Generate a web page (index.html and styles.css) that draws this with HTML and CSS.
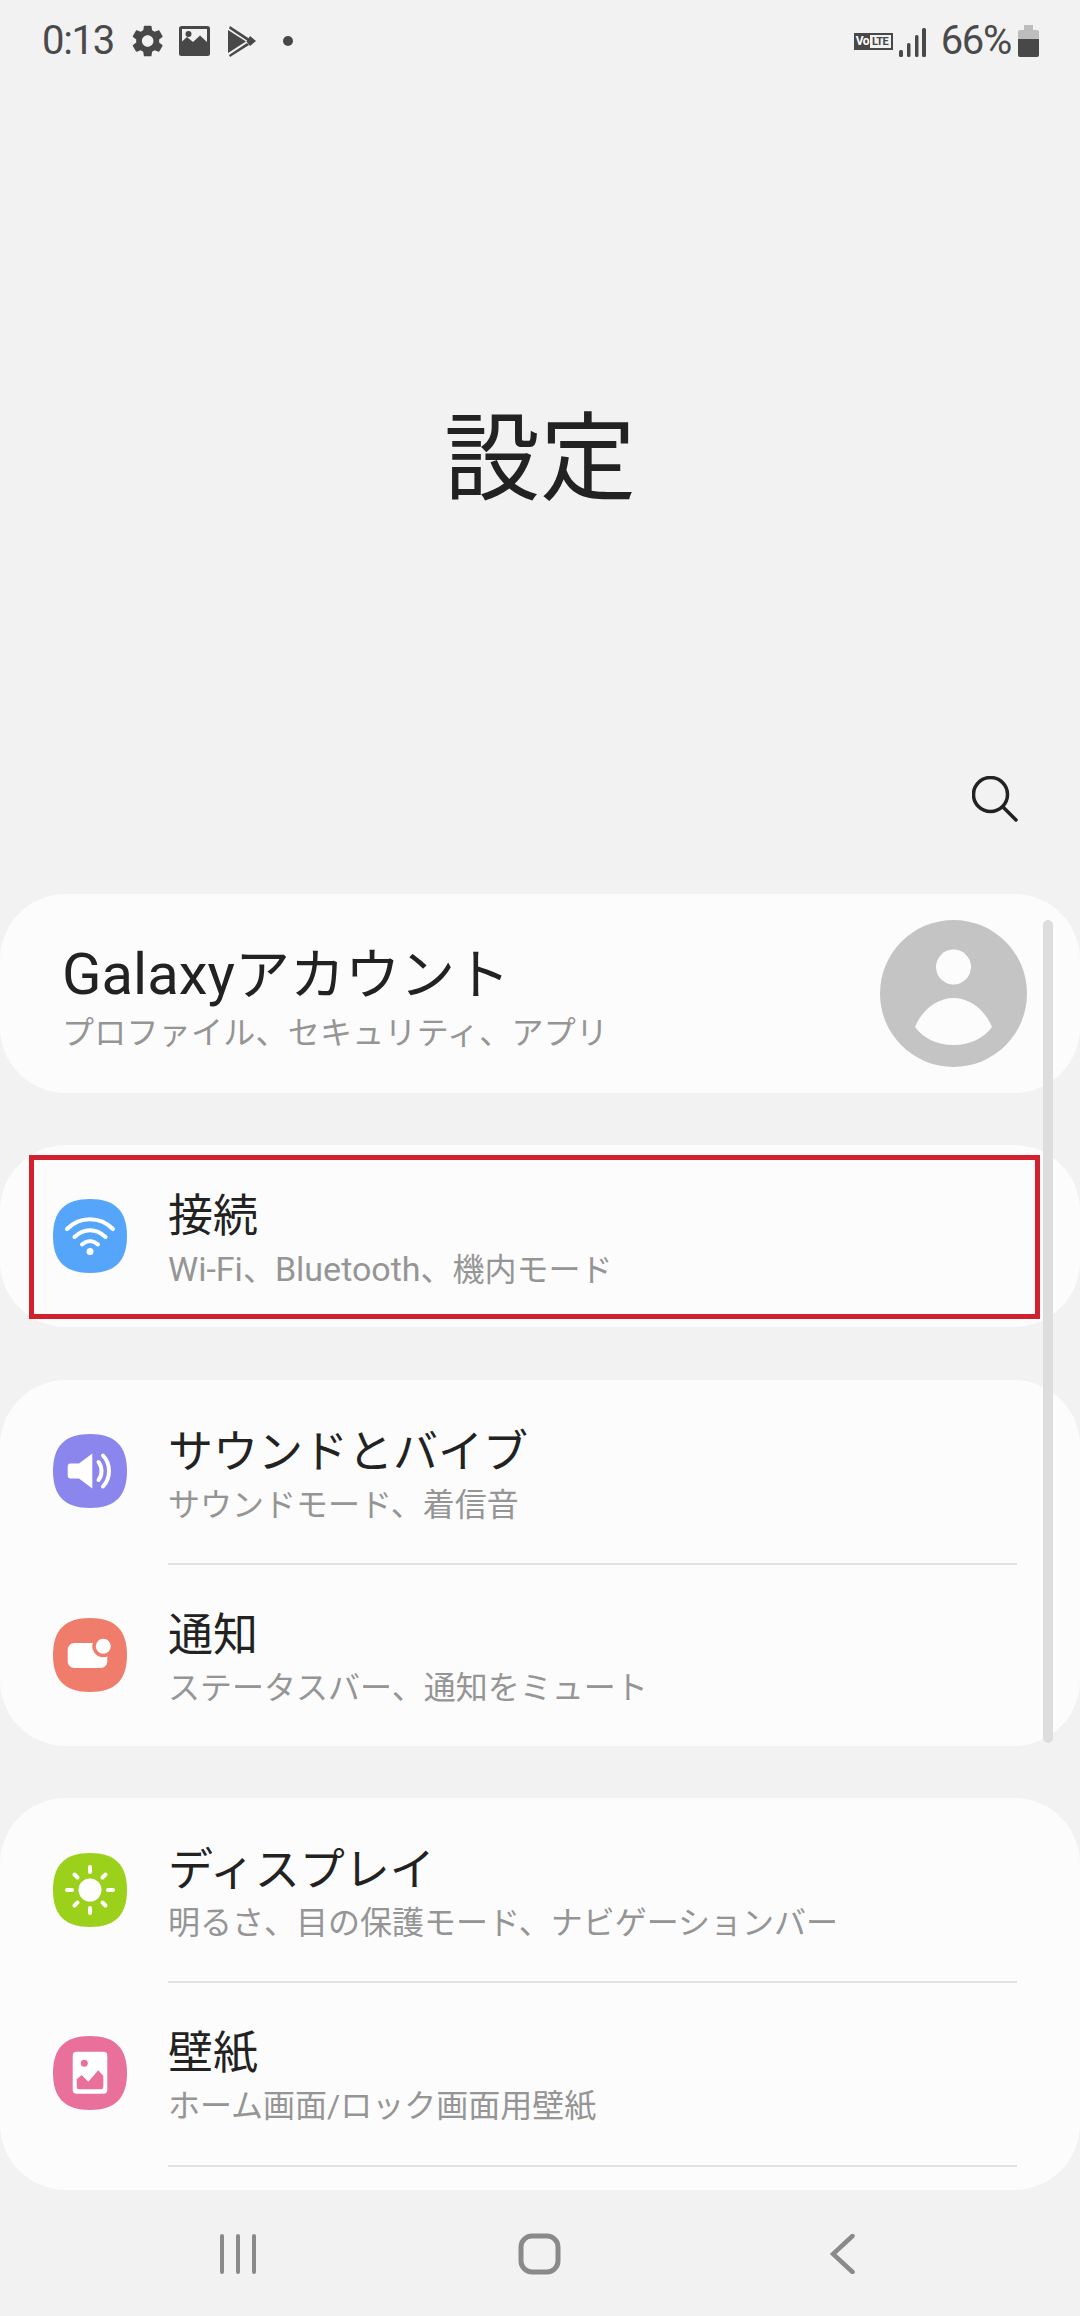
FILE: index.html
```html
<!DOCTYPE html>
<html lang="ja">
  <head>
    <meta charset="utf-8" />
    <meta name="viewport" content="width=device-width, initial-scale=1.0" />
    <title>設定</title>
    <link rel="stylesheet" href="styles.css">
  </head>

  <body>
    <header class="status-bar">
      <div class="status-left">
        <span class="clock">0:13</span>
        <svg class="gear" viewBox="2.4 2 19.6 20"><path d="M19.14 12.94c.04-.3.06-.61.06-.94 0-.32-.02-.64-.07-.94l2.03-1.58a.49.49 0 0 0 .12-.61l-1.92-3.32a.488.488 0 0 0-.59-.22l-2.39.96c-.5-.38-1.03-.7-1.62-.94l-.36-2.54a.484.484 0 0 0-.48-.41h-3.84c-.24 0-.43.17-.47.41l-.36 2.54c-.59.24-1.13.57-1.62.94l-2.39-.96c-.22-.08-.47 0-.59.22L2.74 8.87c-.12.21-.08.47.12.61l2.03 1.58c-.05.3-.09.63-.09.94s.02.64.07.94l-2.03 1.58a.49.49 0 0 0-.12.61l1.92 3.32c.12.22.37.29.59.22l2.39-.96c.5.38 1.03.7 1.62.94l.36 2.54c.05.24.24.41.48.41h3.84c.24 0 .44-.17.47-.41l.36-2.54c.59-.24 1.13-.56 1.62-.94l2.39.96c.22.08.47 0 .59-.22l1.92-3.32c.12-.22.07-.47-.12-.61l-2.01-1.58zM12 15.6c-1.98 0-3.6-1.62-3.6-3.6s1.62-3.6 3.6-3.6 3.6 1.62 3.6 3.6-1.62 3.6-3.6 3.6z"/></svg>
        <svg class="pic" viewBox="0 0 31 30"><path fill-rule="evenodd" d="M2.5 0h26A2.5 2.5 0 0 1 31 2.500v25a2.500 2.500 0 0 1-2.500 2.500h-26A2.500 2.500 0 0 1 0 27.500v-25A2.500 2.500 0 0 1 2.500 0zM3 3v12.500l5-4.500 6 5 7-6.500 7 6.500V3zM9.500 5a3 3 0 1 1 0 6 3 3 0 0 1 0-6z"/></svg>
        <svg class="play" viewBox="0 0 28 31"><path d="M0 4 18 15.500 0 27zM2 0 21 12.500 19 14.500 1 2.500zM1 29 19 17 21 19 2 31zM22 10 28 15 22 20 18.500 15.500z"/></svg>
        <span class="dot"></span>
      </div>
      <div class="status-right">
        <span class="volte"><span class="vo">Vo</span><span class="lte">LTE</span></span>
        <svg class="signal" viewBox="0 0 27 29"><rect x="0" y="22" width="4" height="7" rx="1.500"/><rect x="8" y="15" width="3.500" height="14" rx="1.500"/><rect x="16" y="7" width="3.500" height="22" rx="1.500"/><rect x="23" y="0" width="4" height="29" rx="1.500"/></svg>
        <span class="percent">66%</span>
        <svg class="battery" viewBox="0 0 21 32"><path fill="#bdbdbd" d="M6 0h9v5h4a2 2 0 0 1 2 2v8H0V7a2 2 0 0 1 2-2h4z"/><path d="M0 14h21v16a2 2 0 0 1-2 2H2a2 2 0 0 1-2-2z"/></svg>
      </div>
    </header>

    <h1 class="page-title">設定</h1>

    <div class="search-row">
      <svg class="search" viewBox="0 0 46 46"><circle cx="18.500" cy="18.500" r="17" /><path d="M31 31 44 44"/></svg>
    </div>

    <main class="list">
      <section class="card account">
        <div class="account-text">
          <h2 class="account-name"><span class="latin-big">Galaxy</span>アカウント</h2>
          <p class="sub account-sub">プロファイル、セキュリティ、アプリ</p>
        </div>
        <svg class="avatar" viewBox="0 0 147 147">
          <circle cx="73.500" cy="73.500" r="73.500" fill="#c4c4c4"/>
          <circle cx="73.500" cy="47" r="17.500" fill="#fcfcfc"/>
          <path d="M35 107C42 90 57 78 73.500 78S105 90 112 107C104 118 90 125 73.500 125S43 118 35 107Z" fill="#fcfcfc"/>
        </svg>
      </section>

      <section class="card highlighted">
        <div class="row">
          <svg class="app-icon" viewBox="0 0 74 74">
            <path fill="#55a6fb" d="M37 0C62 0 74 12 74 37S62 74 37 74 0 62 0 37 12 0 37 0Z"/>
            <g class="line-art">
              <path d="M14 30C27 17 47 17 60 30"/>
              <path d="M21.500 38C31 29 43 29 52.500 38"/>
              <path d="M29 45.500C34 41 40 41 45 45.500"/>
            </g>
            <circle cx="37" cy="52.500" r="3.500" fill="#fff"/>
          </svg>
          <div class="row-text">
            <h2 class="row-title">接続</h2>
            <p class="sub"><span class="latin">Wi-Fi</span>、<span class="latin">Bluetooth</span>、機内モード</p>
          </div>
        </div>
        <div class="red-box"></div>
      </section>

      <section class="card">
        <div class="row first-row">
          <svg class="app-icon" viewBox="0 0 74 74">
            <path fill="#8a86ee" d="M37 0C62 0 74 12 74 37S62 74 37 74 0 62 0 37 12 0 37 0Z"/>
            <path fill="#fff" d="M39.300 19.500V54.500L26 44.500H17.500Q14.700 44.500 14.700 41.500V32.500Q14.700 29.500 17.500 29.500H26Z"/>
            <g class="line-art">
              <path d="M45.500 28C49.500 33 49.500 41 45.500 46"/>
              <path d="M50 21.500C58 30 58 44 50 52.500"/>
            </g>
          </svg>
          <div class="row-text">
            <h2 class="row-title">サウンドとバイブ</h2>
            <p class="sub">サウンドモード、着信音</p>
          </div>
        </div>
        <div class="row divided">
          <svg class="app-icon" viewBox="0 0 74 74">
            <path fill="#f07c6c" d="M37 0C62 0 74 12 74 37S62 74 37 74 0 62 0 37 12 0 37 0Z"/>
            <rect x="14.700" y="25" width="39.600" height="25" rx="6.500" fill="#fff"/>
            <circle cx="50.300" cy="28.300" r="11" fill="#f07c6c"/>
            <circle cx="50.300" cy="28.300" r="7.500" fill="#fff"/>
          </svg>
          <div class="row-text">
            <h2 class="row-title">通知</h2>
            <p class="sub">ステータスバー、通知をミュート</p>
          </div>
        </div>
      </section>

      <section class="card last">
        <div class="row divided-next">
          <svg class="app-icon" viewBox="0 0 74 74">
            <path fill="#9bd11a" d="M37 0C62 0 74 12 74 37S62 74 37 74 0 62 0 37 12 0 37 0Z"/>
            <circle cx="37" cy="37" r="11.500" fill="#fff"/>
            <g class="line-art rays">
              <path d="M37 14V19M37 55V60M14 37H19M55 37H60M21.500 21.500 24.500 24.500M49.500 49.500 52.500 52.500M52.500 21.500 49.500 24.500M24.500 49.500 21.500 52.500"/>
            </g>
          </svg>
          <div class="row-text">
            <h2 class="row-title">ディスプレイ</h2>
            <p class="sub">明るさ、目の保護モード、ナビゲーションバー</p>
          </div>
        </div>
        <div class="row divided">
          <svg class="app-icon" viewBox="0 0 74 74">
            <path fill="#e8709a" d="M37 0C62 0 74 12 74 37S62 74 37 74 0 62 0 37 12 0 37 0Z"/>
            <rect x="19.700" y="15.700" width="34.600" height="42" rx="4" fill="#fff"/>
            <circle cx="31.300" cy="27.300" r="3.500" fill="#e8709a"/>
            <path fill="#e8709a" d="M23.700 43.300 28.700 39 35.300 45.700 45.300 34.300 50.300 40V51Q50.300 53.300 48 53.300H26Q23.700 53.300 23.700 51Z"/>
          </svg>
          <div class="row-text">
            <h2 class="row-title">壁紙</h2>
            <p class="sub">ホーム画面/ロック画面用壁紙</p>
          </div>
        </div>
        <div class="row-rule"></div>
      </section>

      <div class="scrollbar"></div>
    </main>

    <nav class="nav-bar">
      <svg class="nav-recent" viewBox="0 0 36 40"><path d="M2 2V38M18 2V38M34 2V38"/></svg>
      <svg class="nav-home" viewBox="0 0 43 42"><rect x="3" y="3" width="37" height="36" rx="11"/></svg>
      <svg class="nav-back" viewBox="0 0 25 40"><path d="M22.500 2 3 20 22.500 38" /></svg>
    </nav>
  </body>
</html>
```

FILE: styles.css
```css
* {
  box-sizing: border-box;
}

html,
body {
  margin: 0;
  padding: 0;
}

body {
  width: 1080px;
  height: 2316px;
  overflow: hidden;
  background-color: #f2f2f2;
  color: #222;
  font-family: Roboto, "Noto Sans CJK JP", sans-serif;
}

h1,
h2,
p {
  margin: 0;
  font-weight: 400;
}

/* status bar */
.status-bar {
  height: 84px;
  padding: 25px 41px 0 42px;
  display: flex;
  justify-content: space-between;
  align-items: flex-start;
  color: #4a4a4a;
  fill: #484848;
}

.status-left,
.status-right {
  display: flex;
  align-items: center;
  height: 32px;
}

.clock,
.percent {
  font-size: 40px;
  line-height: 32px;
  letter-spacing: -1.300px;
}

.gear {
  width: 32px;
  height: 32px;
  margin-left: 18px;
}

.pic {
  width: 31px;
  height: 30px;
  margin-left: 15px;
}

.play {
  width: 28px;
  height: 31px;
  margin-left: 18px;
}

.dot {
  width: 10px;
  height: 10px;
  border-radius: 50%;
  background-color: #484848;
  margin-left: 27px;
}

.volte {
  display: flex;
  width: 39px;
  height: 17px;
  background-color: #484848;
  font-size: 12px;
  line-height: 13px;
  font-weight: 700;
  padding: 2px;
}

.vo {
  color: #fff;
  width: 14px;
  letter-spacing: -0.5px;
}

.lte {
  flex: 1;
  color: #484848;
  background-color: #f2f2f2;
  text-align: center;
  font-size: 11px;
  letter-spacing: -0.5px;
}

.signal {
  width: 27px;
  height: 29px;
  margin-left: 6px;
  margin-top: 3px;
}

.percent {
  margin-left: 15px;
}

.battery {
  width: 21px;
  height: 32px;
  margin-left: 7px;
}

/* title */
.page-title {
  margin-top: 325px;
  height: 100px;
  line-height: 100px;
  text-align: center;
  font-size: 96px;
}

.search-row {
  margin-top: 267px;
  height: 46px;
  margin-bottom: 72px;
  padding-right: 62px;
  display: flex;
  justify-content: flex-end;
}

.search {
  width: 46px;
  height: 46px;
  fill: none;
  stroke: #222;
  stroke-width: 3.500;
  stroke-linecap: round;
}

/* list */
.list {
  position: relative;
  height: 1296px;
}

.card {
  position: relative;
  background-color: #fcfcfc;
  border-radius: 66px;
  margin-bottom: 52px;
}

.highlighted {
  margin-bottom: 53px;
}

.account {
  height: 199px;
  padding: 0 53px 0 62px;
  display: flex;
  justify-content: space-between;
  align-items: center;
}

.account-text {
  padding-top: 10px;
}

.account-name {
  font-size: 55px;
  line-height: 68px;
}

.latin-big {
  font-size: 58px;
}

.account-sub {
  letter-spacing: 0.250px;
}

.avatar {
  width: 147px;
  height: 147px;
}

.row {
  height: 182px;
  padding-left: 53px;
  display: flex;
  align-items: center;
  position: relative;
}

.first-row {
  height: 183px;
  padding-bottom: 1px;
}

.divided-next {
  height: 183px;
}

.app-icon {
  width: 74px;
  height: 74px;
  flex-shrink: 0;
}

.line-art {
  fill: none;
  stroke: #fff;
  stroke-width: 4;
  stroke-linecap: round;
}

.row-text {
  margin-left: 41px;
  padding-top: 11px;
}

.row-title {
  font-size: 45px;
  line-height: 56px;
}

.sub {
  font-size: 32px;
  line-height: 48px;
  color: #959595;
}

.latin {
  font-size: 34px;
}

.divided {
  height: 183px;
}

.divided::before,
.row-rule {
  height: 2px;
  background-color: #e2e2e2;
}

.divided::before {
  content: "";
  position: absolute;
  top: 0;
  left: 168px;
  right: 63px;
}

.row-rule {
  margin: 1px 63px 0 168px;
}

.last {
  height: 392px;
  margin-bottom: 0;
}

/* red box over the connections row */
.red-box {
  position: absolute;
  top: 10px;
  left: 29px;
  width: 1011px;
  height: 164px;
  border: 5px solid #d3202e;
}

.scrollbar {
  position: absolute;
  top: 26px;
  left: 1043px;
  width: 10px;
  height: 823px;
  border-radius: 5px;
  background-color: #dddddd;
}

/* bottom nav */
.nav-bar {
  height: 126px;
  display: flex;
  align-items: center;
  padding-left: 220px;
}

.nav-bar svg {
  fill: none;
  stroke: #8a8a8a;
  stroke-linecap: round;
  margin-top: 2px;
}

.nav-recent {
  width: 36px;
  height: 40px;
  stroke-width: 4;
}

.nav-home {
  width: 43px;
  height: 42px;
  stroke-width: 5;
  margin-left: 262px;
}

.nav-back {
  width: 25px;
  height: 40px;
  stroke-width: 4.500;
  margin-left: 269px;
}
```
